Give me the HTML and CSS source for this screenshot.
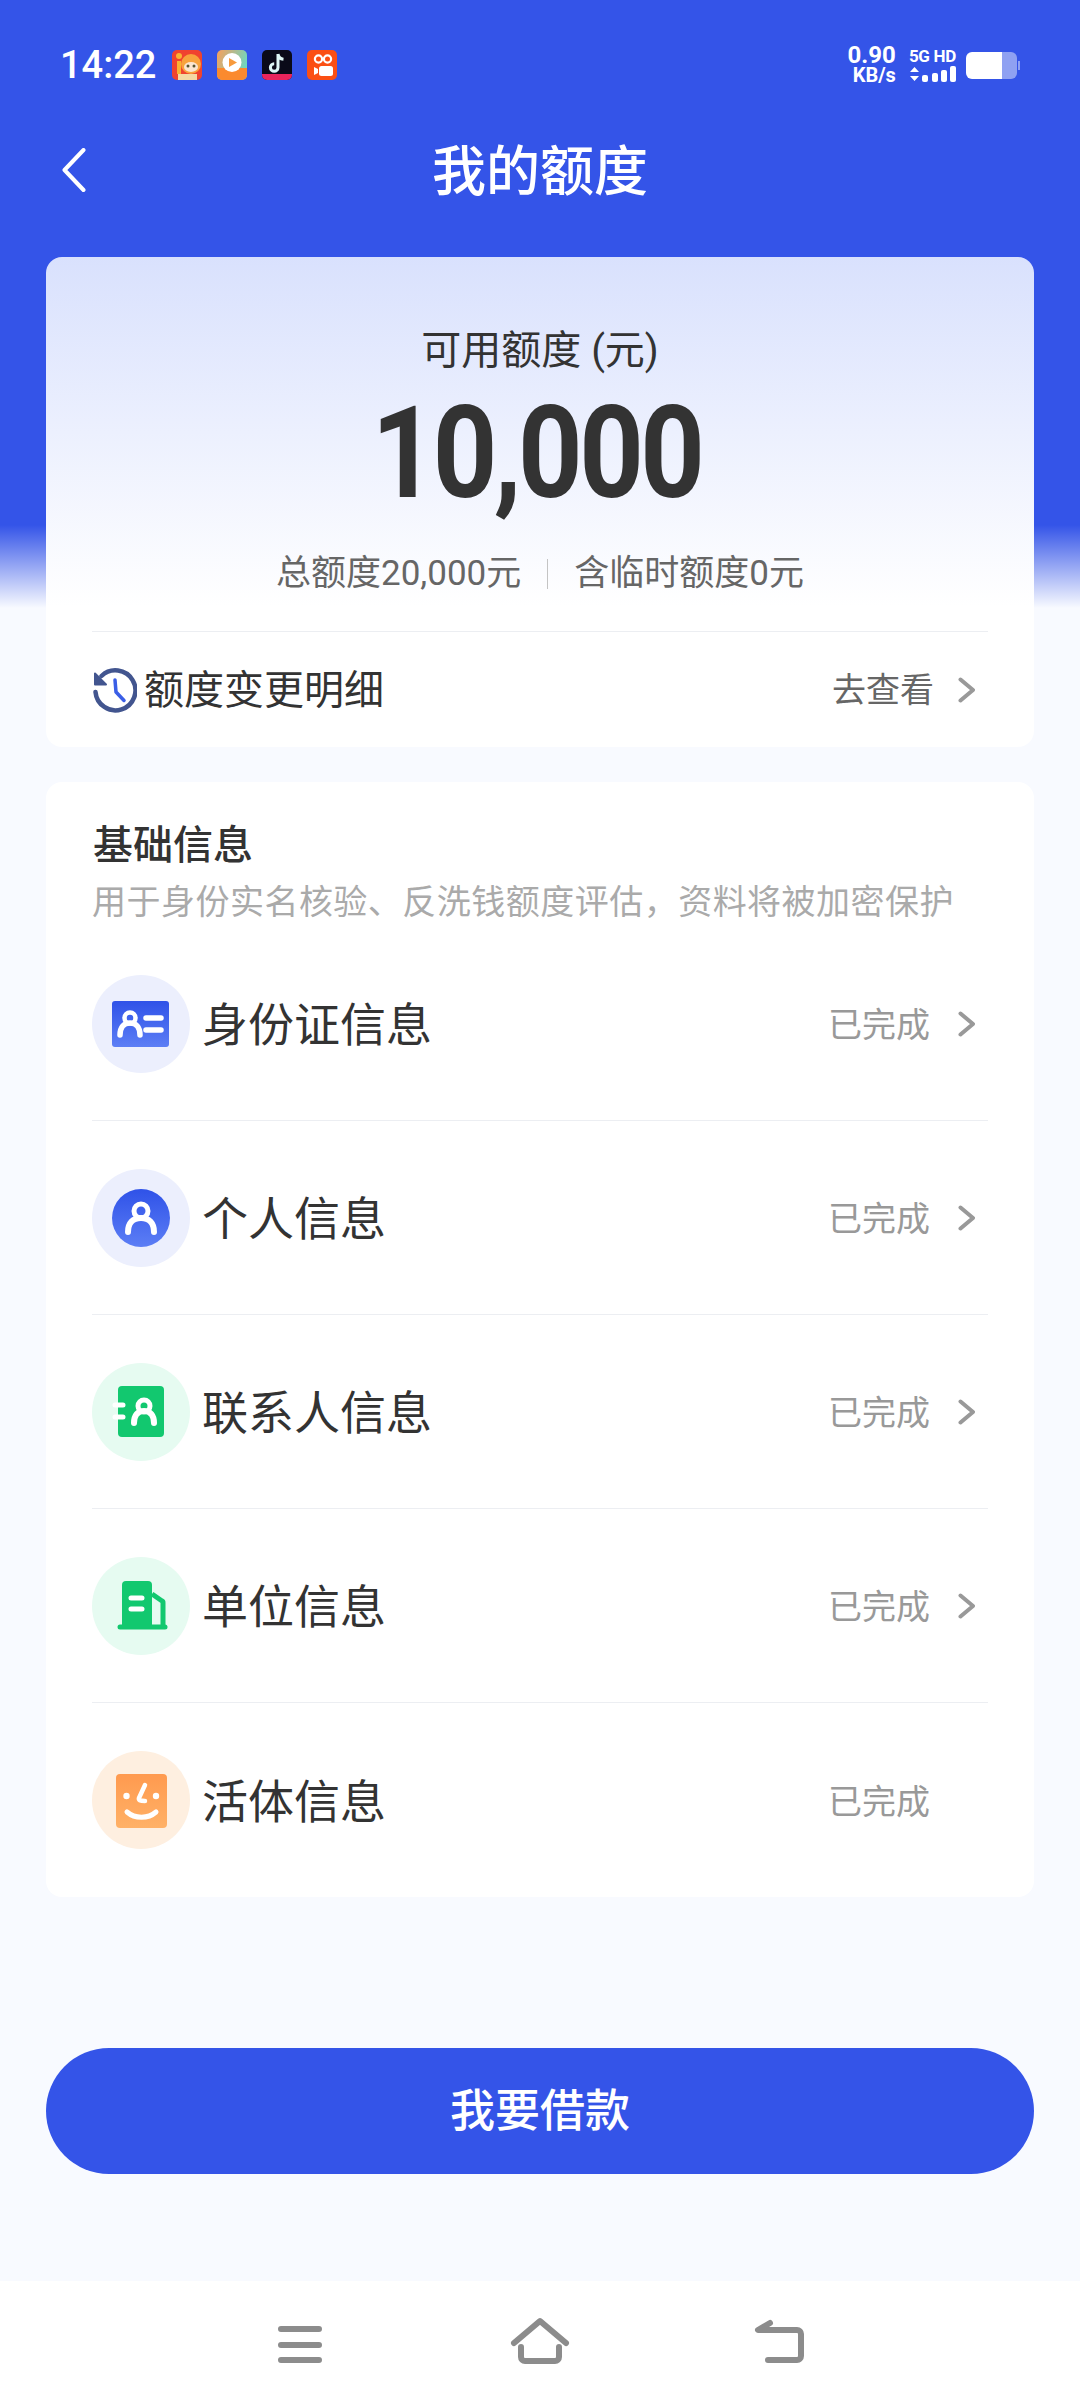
FILE: index.html
```html
<!DOCTYPE html>
<html lang="zh-CN">
<head>
  <meta charset="UTF-8">
  <meta name="viewport" content="width=device-width, initial-scale=1.0">
  <title>我的额度</title>
  <link rel="stylesheet" href="styles.css">
</head>
<body>
  <div class="page">
    <div class="status-bar">
      <span class="status-time">14:22</span>
      <div class="status-apps">
        <svg class="app-icon" viewBox="0 0 30 30">
          <rect width="30" height="30" rx="5" fill="#f0432f"/>
          <circle cx="7" cy="6" r="3" fill="#f9b233"/>
          <path d="M5 11h4v13H5z" fill="#f9b233"/>
          <circle cx="19" cy="14" r="10" fill="#f8a33c"/>
          <ellipse cx="19" cy="17" rx="7" ry="5" fill="#fbe6d0"/>
          <circle cx="16" cy="16" r="1.500" fill="#553"/>
          <circle cx="22" cy="16" r="1.500" fill="#553"/>
          <path d="M6 24h19v6H6z" fill="#f3d9a4"/>
        </svg>
        <svg class="app-icon" viewBox="0 0 30 30">
          <defs>
            <linearGradient id="app2" x1="0" y1="0" x2="1" y2="0.4">
              <stop offset="0" stop-color="#f9a05a"/>
              <stop offset="1" stop-color="#6fd6c0"/>
            </linearGradient>
          </defs>
          <rect width="30" height="30" rx="5" fill="url(#app2)"/>
          <path d="M0 18h30v7a5 5 0 0 1-5 5H5a5 5 0 0 1-5-5z" fill="#fb8a2e"/>
          <circle cx="15" cy="12.500" r="9.500" fill="#fff"/>
          <path d="M12 8l8 4.500-8 4.500z" fill="#f79a3c"/>
        </svg>
        <svg class="app-icon" viewBox="0 0 30 30">
          <rect width="30" height="30" rx="5" fill="#0a0a18"/>
          <path d="M0 24h30v1a5 5 0 0 1-5 5H5a5 5 0 0 1-5-5z" fill="#e8245c"/>
          <path d="M16 4v13.500a3.800 3.800 0 1 1-3.800-3.800M16 4c.4 3 2.400 5 5.500 5.300" fill="none" stroke="#dff7f6" stroke-width="3"/>
        </svg>
        <svg class="app-icon" viewBox="0 0 30 30">
          <rect width="30" height="30" rx="5" fill="#fb4f14"/>
          <circle cx="11.500" cy="9" r="3.600" fill="none" stroke="#fff" stroke-width="2.200"/>
          <circle cx="20.500" cy="9" r="3.600" fill="none" stroke="#fff" stroke-width="2.200"/>
          <rect x="12" y="16" width="14" height="10" rx="2.500" fill="#fff"/>
          <path d="M11 19l-4-2v8l4-2z" fill="#fff"/>
        </svg>
      </div>
      <div class="status-right">
        <div class="net-speed">
          <span class="net-value">0.90</span>
          <span class="net-unit">KB/s</span>
        </div>
        <div class="signal">
          <span class="signal-text">5G HD</span>
          <svg class="signal-bars" viewBox="0 0 47 16">
            <path d="M1 6l4.500-5 4.500 5zM1 10h9l-4.500 5z" fill="#fff"/>
            <rect x="13" y="9" width="6" height="7" rx="2" fill="#fff"/>
            <rect x="23" y="7" width="6" height="9" rx="2" fill="#fff"/>
            <rect x="32" y="4" width="6" height="12" rx="2" fill="#fff"/>
            <rect x="41" y="0" width="6" height="16" rx="2" fill="#fff"/>
          </svg>
        </div>
        <svg class="battery" viewBox="0 0 54 27">
          <path d="M36 0h9a6 6 0 0 1 6 6v15a6 6 0 0 1-6 6h-9z" fill="#fff" opacity="0.45"/>
          <path d="M52 9h2v9h-2z" fill="#fff" opacity="0.45"/>
          <path d="M6 0h30v27H6a6 6 0 0 1-6-6V6a6 6 0 0 1 6-6z" fill="#fff"/>
        </svg>
      </div>
    </div>

    <div class="top-nav">
      <svg class="back-icon" viewBox="0 0 24 44">
        <path d="M21.500 2L2.500 22l19 20" fill="none" stroke="#fff" stroke-width="4" stroke-linecap="round" stroke-linejoin="round"/>
      </svg>
      <h1 class="top-title">我的额度</h1>
    </div>

    <section class="card quota-card">
      <div class="quota-label">可用额度 (元)</div>
      <div class="quota-amount">10,000</div>
      <div class="quota-sub">
        <span>总额度20,000元</span>
        <i class="quota-sep"></i>
        <span>含临时额度0元</span>
      </div>
      <div class="quota-link">
        <svg class="clock-icon" viewBox="0 0 44 46">
          <path d="M8.500 9A20 20 0 1 1 2.500 25" fill="none" stroke="#42558f" stroke-width="4.500" stroke-linecap="round"/>
          <path d="M2 6.500v11h11z" fill="#42558f" stroke="#42558f" stroke-width="2" stroke-linejoin="round"/>
          <path d="M22 13l1 12 8 8.500" fill="none" stroke="#3a5ee6" stroke-width="3.500" stroke-linecap="round" stroke-linejoin="round"/>
        </svg>
        <span class="quota-link-text">额度变更明细</span>
        <span class="row-action">去查看</span>
        <svg class="chevron" viewBox="0 0 17 26"><path d="M2.500 2.500L15 13 2.500 23.500" fill="none" stroke="#999" stroke-width="4" stroke-linecap="round" stroke-linejoin="round"/></svg>
      </div>
    </section>

    <section class="card info-card">
      <div class="info-head">
        <h2 class="info-title">基础信息</h2>
        <p class="info-desc">用于身份实名核验、反洗钱额度评估，资料将被加密保护</p>
      </div>

      <div class="info-row">
        <svg class="row-icon" viewBox="0 0 98 98">
          <defs>
            <linearGradient id="blue-fill" x1="0" y1="0" x2="0" y2="1">
              <stop offset="0" stop-color="#2f52e8"/>
              <stop offset="1" stop-color="#5c7ef5"/>
            </linearGradient>
          </defs>
          <circle cx="49" cy="49" r="49" fill="#eceffd"/>
          <rect x="20" y="26" width="57" height="46" rx="3" fill="url(#blue-fill)"/>
          <circle cx="38" cy="43" r="5.500" fill="none" stroke="#fff" stroke-width="4.500"/>
          <path d="M28 60c0-8 4-12 10-12s10 4 10 12" fill="none" stroke="#fff" stroke-width="5.500" stroke-linecap="round"/>
          <path d="M54 43h15M54 55h15" fill="none" stroke="#fff" stroke-width="5.500" stroke-linecap="round"/>
        </svg>
        <span class="row-label">身份证信息</span>
        <span class="row-status">已完成</span>
        <svg class="chevron" viewBox="0 0 17 26"><path d="M2.500 2.500L15 13 2.500 23.500" fill="none" stroke="#999" stroke-width="4" stroke-linecap="round" stroke-linejoin="round"/></svg>
      </div>

      <div class="info-row">
        <svg class="row-icon" viewBox="0 0 98 98">
          <circle cx="49" cy="49" r="49" fill="#eceffd"/>
          <circle cx="49" cy="49" r="29" fill="url(#blue-fill)"/>
          <circle cx="49" cy="42" r="7" fill="none" stroke="#fff" stroke-width="5"/>
          <path d="M36 63c0-9 5-14 13-14s13 5 13 14" fill="none" stroke="#fff" stroke-width="6" stroke-linecap="round"/>
        </svg>
        <span class="row-label">个人信息</span>
        <span class="row-status">已完成</span>
        <svg class="chevron" viewBox="0 0 17 26"><path d="M2.500 2.500L15 13 2.500 23.500" fill="none" stroke="#999" stroke-width="4" stroke-linecap="round" stroke-linejoin="round"/></svg>
      </div>

      <div class="info-row">
        <svg class="row-icon" viewBox="0 0 98 98">
          <circle cx="49" cy="49" r="49" fill="#e6fbf1"/>
          <rect x="26" y="23" width="46" height="51" rx="4" fill="#12c86f"/>
          <path d="M23 42h8M23 54h8" fill="none" stroke="#fff" stroke-width="5" stroke-linecap="round"/>
          <circle cx="52" cy="43" r="6" fill="none" stroke="#fff" stroke-width="5"/>
          <path d="M42 60c0-8 4-12 10-12s10 4 10 12" fill="none" stroke="#fff" stroke-width="6" stroke-linecap="round"/>
        </svg>
        <span class="row-label">联系人信息</span>
        <span class="row-status">已完成</span>
        <svg class="chevron" viewBox="0 0 17 26"><path d="M2.500 2.500L15 13 2.500 23.500" fill="none" stroke="#999" stroke-width="4" stroke-linecap="round" stroke-linejoin="round"/></svg>
      </div>

      <div class="info-row">
        <svg class="row-icon" viewBox="0 0 98 98">
          <circle cx="49" cy="49" r="49" fill="#e6fbf1"/>
          <path d="M30 70V28a4 4 0 0 1 4-4h22a4 4 0 0 1 4 4v42z" fill="#12c86f"/>
          <path d="M60 37l10 7a2 2 0 0 1 1 2v24" fill="none" stroke="#12c86f" stroke-width="5"/>
          <path d="M28 70h45" fill="none" stroke="#12c86f" stroke-width="5" stroke-linecap="round"/>
          <path d="M39 41h11M39 52h11" fill="none" stroke="#fff" stroke-width="5" stroke-linecap="round"/>
        </svg>
        <span class="row-label">单位信息</span>
        <span class="row-status">已完成</span>
        <svg class="chevron" viewBox="0 0 17 26"><path d="M2.500 2.500L15 13 2.500 23.500" fill="none" stroke="#999" stroke-width="4" stroke-linecap="round" stroke-linejoin="round"/></svg>
      </div>

      <div class="info-row">
        <svg class="row-icon" viewBox="0 0 98 98">
          <defs>
            <linearGradient id="orange-fill" x1="0" y1="0" x2="0" y2="1">
              <stop offset="0" stop-color="#ff9a4f"/>
              <stop offset="1" stop-color="#ffb167"/>
            </linearGradient>
          </defs>
          <circle cx="49" cy="49" r="49" fill="#feefe0"/>
          <rect x="24" y="23" width="51" height="54" rx="4" fill="url(#orange-fill)"/>
          <circle cx="34.500" cy="45" r="3.200" fill="#fff"/>
          <circle cx="64" cy="45" r="3.200" fill="#fff"/>
          <path d="M53 34l-6 13c-.6 2 .6 3 6 3" fill="none" stroke="#fff" stroke-width="4.500" stroke-linecap="round" stroke-linejoin="round"/>
          <path d="M35 61c8 7 21 7 29 0" fill="none" stroke="#fff" stroke-width="5" stroke-linecap="round"/>
        </svg>
        <span class="row-label">活体信息</span>
        <span class="row-status no-arrow">已完成</span>
      </div>
    </section>

    <button class="loan-btn">我要借款</button>

    <div class="bottom-nav">
      <svg class="nav-icon" viewBox="0 0 60 60">
        <path d="M11 14h38M11 30h38M11 45h38" fill="none" stroke="#8c8c8c" stroke-width="6" stroke-linecap="round"/>
      </svg>
      <svg class="nav-icon" viewBox="0 0 60 60">
        <path d="M4 28L30 6l26 22" fill="none" stroke="#8c8c8c" stroke-width="6" stroke-linecap="round" stroke-linejoin="round"/>
        <path d="M11 32v10a4 4 0 0 0 4 4h30a4 4 0 0 0 4-4V32" fill="none" stroke="#8c8c8c" stroke-width="6" stroke-linecap="round"/>
      </svg>
      <svg class="nav-icon" viewBox="0 0 60 60">
        <path d="M20 8L8 15h39a4 4 0 0 1 4 4v22a4 4 0 0 1-4 4H18" fill="none" stroke="#8c8c8c" stroke-width="6" stroke-linecap="round" stroke-linejoin="round"/>
      </svg>
    </div>
  </div>
</body>
</html>
```

FILE: styles.css
```css
* {
  box-sizing: border-box;
}
body {
  margin: 0;
  font-family: Roboto, 'Noto Sans CJK SC', sans-serif;
  color: #333;
}
.page {
  width: 1080px;
  height: 2408px;
  display: flex;
  flex-direction: column;
  background: linear-gradient(to bottom, #3454e8 0, #3454e8 525px, #f8faff 608px, #f8faff 100%);
}
.status-bar {
  height: 130px;
  flex-shrink: 0;
  display: flex;
  align-items: center;
  padding: 0 60px;
  color: #fff;
}
.status-time {
  font-size: 38px;
  font-weight: 500;
  line-height: 44px;
}
.status-apps {
  display: flex;
  gap: 15px;
  margin-left: 16px;
}
.app-icon {
  width: 30px;
  height: 30px;
  display: block;
}
.status-right {
  margin-left: auto;
  display: flex;
  align-items: center;
}
.net-speed {
  display: flex;
  flex-direction: column;
  align-items: flex-end;
  font-weight: 700;
  line-height: 20px;
}
.net-value {
  font-size: 24px;
}
.net-unit {
  font-size: 20px;
}
.signal {
  margin-left: 13px;
  display: flex;
  flex-direction: column;
  gap: 3px;
}
.signal-text {
  font-size: 17px;
  font-weight: 700;
  line-height: 14px;
  letter-spacing: -0.3px;
  white-space: nowrap;
}
.signal-bars {
  width: 47px;
  height: 16px;
  display: block;
}
.battery {
  width: 54px;
  height: 27px;
  margin-left: 10px;
  display: block;
}
.top-nav {
  height: 80px;
  flex-shrink: 0;
  position: relative;
  display: flex;
  align-items: center;
  justify-content: center;
  margin-bottom: 47px;
}
.back-icon {
  position: absolute;
  left: 62px;
  top: 18px;
  width: 24px;
  height: 44px;
}
.top-title {
  margin: 6px 0 0;
  color: #fff;
  font-size: 54px;
  font-weight: 500;
  line-height: 70px;
}
.card {
  width: 988px;
  margin: 0 46px;
  flex-shrink: 0;
  border-radius: 16px;
  background: #fff;
}
.quota-card {
  height: 490px;
  padding-top: 66px;
  background: linear-gradient(to bottom, #d9e1fd 0, #ffffff 350px);
  margin-bottom: 35px;
}
.quota-label {
  text-align: center;
  font-size: 40px;
  line-height: 56px;
}
.quota-amount {
  margin-top: 9px;
  padding-right: 8px;
  text-align: center;
  font-size: 128px;
  font-weight: 700;
  line-height: 130px;
  letter-spacing: -4px;
  transform: scaleX(0.88);
}
.quota-sub {
  margin-top: 33px;
  margin-bottom: -1px;
  display: flex;
  align-items: center;
  justify-content: center;
  gap: 26px;
  font-size: 35px;
  line-height: 46px;
  color: #666;
}
.quota-sep {
  width: 1px;
  height: 30px;
  background: #c4c4c4;
}
.quota-link {
  margin: 35px 46px 0;
  height: 116px;
  border-top: 1px solid #eceef2;
  display: flex;
  align-items: center;
  padding-right: 13px;
}
.clock-icon {
  width: 44px;
  height: 46px;
  margin-left: 1px;
  flex-shrink: 0;
}
.quota-link-text {
  margin-left: 7px;
  margin-bottom: 5px;
  font-size: 40px;
}
.row-action {
  margin-left: auto;
  margin-bottom: 4px;
  font-size: 34px;
  color: #666;
}
.chevron {
  width: 17px;
  height: 26px;
  margin-left: 24px;
  flex-shrink: 0;
}
.info-card {
  height: 1115px;
  padding: 0 46px;
}
.info-head {
  height: 145px;
  padding-top: 36px;
}
.info-title {
  margin: 0 0 0 1px;
  font-size: 40px;
  font-weight: 500;
  line-height: 56px;
}
.info-desc {
  margin: 3px 0 0;
  font-size: 34px;
  line-height: 50px;
  color: #aaa;
  white-space: nowrap;
  letter-spacing: 0.48px;
}
.info-row {
  height: 194px;
  display: flex;
  align-items: center;
  padding-right: 13px;
  border-bottom: 1px solid #eceef2;
}
.info-row:last-child {
  border-bottom: 0;
}
.row-icon {
  width: 98px;
  height: 98px;
  flex-shrink: 0;
}
.row-label {
  margin-left: 12px;
  margin-bottom: 5px;
  font-size: 46px;
}
.row-status {
  margin-left: auto;
  margin-bottom: 2px;
  font-size: 34px;
  color: #999;
}
.row-status + .chevron {
  margin-left: 28px;
}
.no-arrow {
  margin-right: 45px;
}
.loan-btn {
  width: 988px;
  height: 126px;
  margin: 151px 46px 0;
  padding: 0 0 8px;
  flex-shrink: 0;
  border: 0;
  border-radius: 63px;
  background: #3454e8;
  color: #fff;
  font-family: inherit;
  font-size: 45px;
  font-weight: 500;
}
.bottom-nav {
  margin-top: auto;
  height: 127px;
  flex-shrink: 0;
  background: #fff;
  display: grid;
  grid-template-columns: repeat(3, 240px);
  justify-content: center;
  justify-items: center;
  align-items: center;
}
.nav-icon {
  width: 60px;
  height: 60px;
  display: block;
}
```
